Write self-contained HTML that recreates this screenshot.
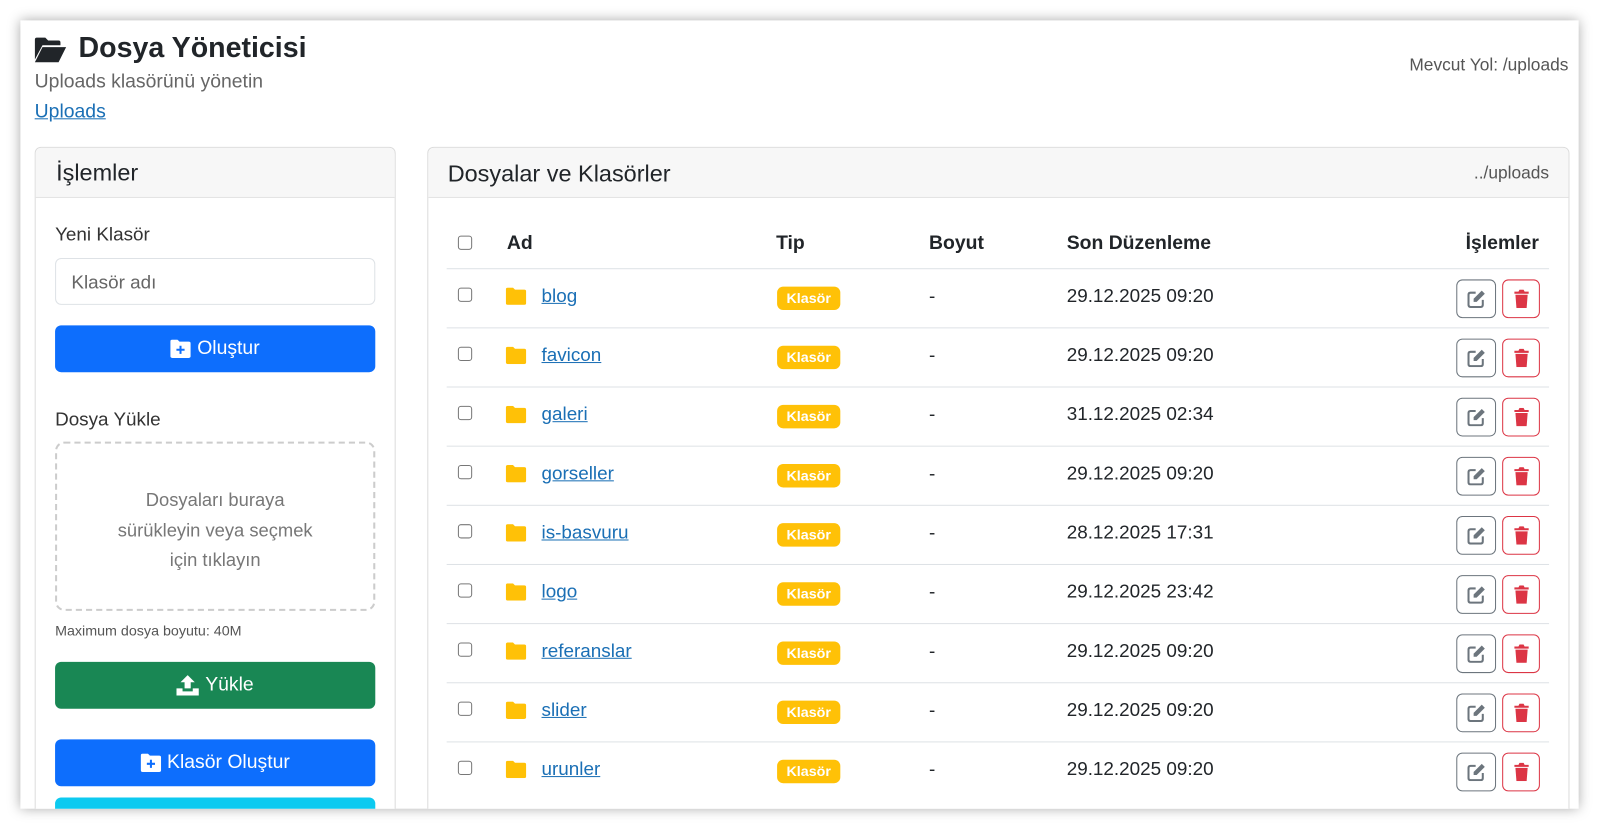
<!DOCTYPE html>
<html><head><meta charset="utf-8"><style>
*{box-sizing:border-box;margin:0;padding:0}
body{width:1599px;height:828px;background:#fff;font-family:"Segoe UI","Liberation Sans","DejaVu Sans",sans-serif;color:#212529;position:relative;overflow:hidden}
#sc{position:absolute;left:0;top:0;width:1568px;height:812px;transform:scale(1.0198);transform-origin:0 0}
.win{position:absolute;left:20px;top:20px;width:1528px;height:773px;background:#fff;box-shadow:0 0 12px rgba(0,0,0,.35);overflow:hidden}
.a{position:absolute}
a{color:#0d6efd;text-decoration:underline}
.lnk{color:#1a6fb5}
.card{position:absolute;border:1px solid #dcdcdc;border-radius:6px;background:#fff}
.ch{background:#f7f7f7;border-bottom:1px solid #dcdcdc;height:49px;border-radius:6px 6px 0 0}
.btn{position:absolute;border-radius:6px;color:#fff;font-size:19px;display:flex;align-items:center;justify-content:center;gap:6px}
.row{position:absolute;left:438px;width:1081px;height:58px;border-top:1px solid #dee2e6;font-size:18.5px}
.cb{position:absolute;left:11px;width:14px;height:14px;border:1.3px solid #777;border-radius:3px;background:#fff}
.badge{position:absolute;left:324px;top:17px;width:62px;height:23px;background:#ffc107;border-radius:6px;color:#fff;font-weight:bold;font-size:14px;text-align:center;line-height:23px}
.eb{position:absolute;left:990px;top:10px;width:39px;height:38px;border:1px solid #6c757d;border-radius:6px;display:flex;align-items:center;justify-content:center}
.db{position:absolute;left:1035px;top:10px;width:37px;height:38px;border:1px solid #dc3545;border-radius:6px;display:flex;align-items:center;justify-content:center}
</style></head><body>
<div id="sc">
<div class="win">
<div style="position:absolute;left:-20px;top:-20px;width:1599px;height:828px">
<svg class="a" style="left:33px;top:36px" width="34" height="26" viewBox="0 0 34 28"><path d="M0 3Q0 1 2 1H11L14 4H25Q27 4 27 6V9H8L0 24Z" fill="#212529"/><path d="M8 11H33L25 27H0Z" fill="#212529"/></svg>
<div class="a" style="left:77px;top:31px;font-size:28px;font-weight:600">Dosya Yöneticisi</div>
<div class="a" style="left:34px;top:70px;font-size:19px;color:#666">Uploads klasörünü yönetin</div>
<div class="a" style="left:34px;top:99px;font-size:19px"><a class="lnk">Uploads</a></div>
<div class="a" style="left:1382px;top:54px;font-size:17px;color:#555">Mevcut Yol: /uploads</div>

<div class="card" style="left:34px;top:144px;width:354px;height:700px">
<div class="ch"><div class="a" style="left:20px;top:11px;font-size:23px;font-weight:500">İşlemler</div></div>
</div>
<div class="a" style="left:54px;top:219px;font-size:18.5px;color:#333">Yeni Klasör</div>
<div class="a" style="left:54px;top:253px;width:314px;height:46px;border:1px solid #dee2e6;border-radius:6px;font-size:18.5px;color:#666;padding:12px 15px">Klasör adı</div>
<div class="btn" style="left:54px;top:319px;width:314px;height:46px;background:#0d6efd"><svg width="20" height="18" viewBox="0 0 20 18"><path d="M0 2Q0 0 2 0H7L9 2H18Q20 2 20 4V16Q20 18 18 18H2Q0 18 0 16Z" fill="#fff"/><path d="M10 6V14M6 10H14" stroke="#0d6efd" stroke-width="2"/></svg>Oluştur</div>
<div class="a" style="left:54px;top:400px;font-size:18.5px;color:#333">Dosya Yükle</div>
<div class="a" style="left:54px;top:433px;width:314px;height:166px;border:2px dashed #ccc;border-radius:9px;text-align:center;font-size:18px;color:#777;line-height:29.5px;padding-top:41px">Dosyaları buraya<br>sürükleyin veya seçmek<br>için tıklayın</div>
<div class="a" style="left:54px;top:610px;font-size:14px;color:#555">Maximum dosya boyutu: 40M</div>
<div class="btn" style="left:54px;top:649px;width:314px;height:46px;background:#198754"><svg width="22" height="20" viewBox="0 0 22 20"><path d="M11 0L4 7H8V13H14V7H18Z" fill="#fff"/><path d="M0 13V20H22V13H16V16H6V13Z" fill="#fff"/></svg>Yükle</div>
<div class="btn" style="left:54px;top:725px;width:314px;height:46px;background:#0d6efd"><svg width="20" height="18" viewBox="0 0 20 18"><path d="M0 2Q0 0 2 0H7L9 2H18Q20 2 20 4V16Q20 18 18 18H2Q0 18 0 16Z" fill="#fff"/><path d="M10 6V14M6 10H14" stroke="#0d6efd" stroke-width="2"/></svg>Klasör Oluştur</div>
<div class="btn" style="left:54px;top:782px;width:314px;height:46px;background:#0dcaf0"></div>

<div class="card" style="left:419px;top:144px;width:1120px;height:700px">
<div class="ch"><div class="a" style="left:19px;top:12px;font-size:23px;font-weight:500">Dosyalar ve Klasörler</div><div class="a" style="right:19px;top:15px;font-size:17px;color:#555">../uploads</div></div>
</div>
<div class="a" style="left:438px;top:216px;width:1081px;height:47px;font-size:19px;font-weight:bold">
<div class="cb" style="top:15px"></div>
<div class="a" style="left:59px;top:12px">Ad</div>
<div class="a" style="left:323px;top:12px">Tip</div>
<div class="a" style="left:473px;top:12px">Boyut</div>
<div class="a" style="left:608px;top:12px">Son Düzenleme</div>
<div class="a" style="right:10px;top:12px">İşlemler</div>
</div>
<div id="rows"></div>
<script>
var d=[["blog","29.12.2025 09:20"],["favicon","29.12.2025 09:20"],["galeri","31.12.2025 02:34"],["gorseller","29.12.2025 09:20"],["is-basvuru","28.12.2025 17:31"],["logo","29.12.2025 23:42"],["referanslar","29.12.2025 09:20"],["slider","29.12.2025 09:20"],["urunler","29.12.2025 09:20"]];
var h="";
d.forEach(function(r,i){
h+='<div class="row" style="top:'+(263+58*i)+'px"><div class="cb" style="top:18px"></div>'+
'<svg class="a" style="left:58px;top:18px" width="20" height="17" viewBox="0 0 20 17"><path d="M0 2Q0 0 2 0H7L9 2H18Q20 2 20 4V15Q20 17 18 17H2Q0 17 0 15Z" fill="#ffc107"/></svg>'+
'<div class="a" style="left:93px;top:15px"><a class="lnk">'+r[0]+'</a></div>'+
'<div class="badge">Klasör</div><div class="a" style="left:473px;top:15px">-</div>'+
'<div class="a" style="left:608px;top:15px">'+r[1]+'</div>'+
'<div class="eb"><svg width="18" height="18" viewBox="0 0 18 18"><path d="M8 3H3Q1 3 1 5V15Q1 17 3 17H13Q15 17 15 15V10" fill="none" stroke="#6c757d" stroke-width="2"/><path d="M14 1L17 4L9 12H6V9Z" fill="#6c757d"/></svg></div>'+
'<div class="db"><svg width="16" height="18" viewBox="0 0 16 18"><path d="M1 2H5L6 0H10L11 2H15V4H1Z" fill="#dc3545"/><path d="M2 5H14L13 18H3Z" fill="#dc3545"/></svg></div></div>';
});
document.getElementById("rows").innerHTML=h;
</script>
</div>
</div>
</div>
</body></html>
